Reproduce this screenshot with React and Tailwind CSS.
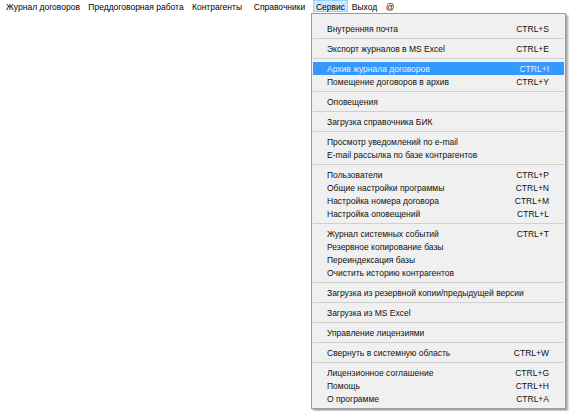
import React from "react";

const bar = [
  { t: "Журнал договоров", w: "w-[82px]" },
  { t: "Преддоговорная работа", w: "w-[104px]" },
  { t: "Контрагенты", w: "w-[58px]" },
  { t: "Справочники", w: "w-[67px]" },
  { t: "Сервис", w: "w-[35px]", active: true },
  { t: "Выход", w: "w-[33px]" },
  { t: "@", w: "w-[18px]" },
];

const groups = [
  [["Внутренняя почта", "CTRL+S"]],
  [["Экспорт журналов в MS Excel", "CTRL+E"]],
  [
    ["Архив журнала договоров", "CTRL+I", true],
    ["Помещение договоров в архив", "CTRL+Y"],
  ],
  [["Оповещения"]],
  [["Загрузка справочника БИК"]],
  [["Просмотр уведомлений по e-mail"], ["E-mail рассылка по базе контрагентов"]],
  [
    ["Пользователи", "CTRL+P"],
    ["Общие настройки программы", "CTRL+N"],
    ["Настройка номера договора", "CTRL+M"],
    ["Настройка оповещений", "CTRL+L"],
  ],
  [
    ["Журнал системных событий", "CTRL+T"],
    ["Резервное копирование базы"],
    ["Переиндексация базы"],
    ["Очистить историю контрагентов"],
  ],
  [["Загрузка из резервной копии/предыдущей версии"]],
  [["Загрузка из MS Excel"]],
  [["Управление лицензиями"]],
  [["Свернуть в системную область", "CTRL+W"]],
  [
    ["Лицензионное соглашение", "CTRL+G"],
    ["Помощь", "CTRL+H"],
    ["О программе", "CTRL+A"],
  ],
];

function Item({ label, key2, active }) {
  return (
    <div
      className={
        "h-[13px] flex items-center justify-between pl-[14px] pr-[15px] pt-[2px] mx-[1px] " +
        (active ? "bg-[#3399ff] text-[#e4efff]" : "text-[#111111]")
      }
    >
      <span className="whitespace-nowrap">{label}</span>
      {key2 ? <span className="whitespace-nowrap">{key2}</span> : null}
    </div>
  );
}

export default function App() {
  return (
    <div
      className="relative w-[570px] h-[411px] bg-white overflow-hidden text-[8.5px] leading-none"
      style={{ fontFamily: '"Liberation Sans", Arial, sans-serif' }}
    >
      <div className="flex h-[12px] pl-[2px] text-black">
        {bar.map((b) => (
          <div
            key={b.t}
            className={
              b.w +
              " h-[12px] flex items-center justify-center whitespace-nowrap pt-[2px] " +
              (b.active ? "bg-[#cce8ff] border border-[#99d1ff]" : "")
            }
          >
            {b.t}
          </div>
        ))}
      </div>

      <div className="absolute left-[311px] top-[13px] w-[255px] h-[396px] bg-[#f0f0f0] border border-[#9a9a9a] shadow-[2px_2px_2px_rgba(0,0,0,0.35)] pt-[8px] pb-[2px] flex flex-col">
        {groups.map((g, gi) => (
          <React.Fragment key={gi}>
            {gi > 0 && (
              <div className="h-[7px] flex items-center mx-[1px]">
                <div className="w-full h-px bg-[#cfcfcf]" />
              </div>
            )}
            {g.map((it) => (
              <Item key={it[0]} label={it[0]} key2={it[1]} active={it[2]} />
            ))}
          </React.Fragment>
        ))}
      </div>
    </div>
  );
}
